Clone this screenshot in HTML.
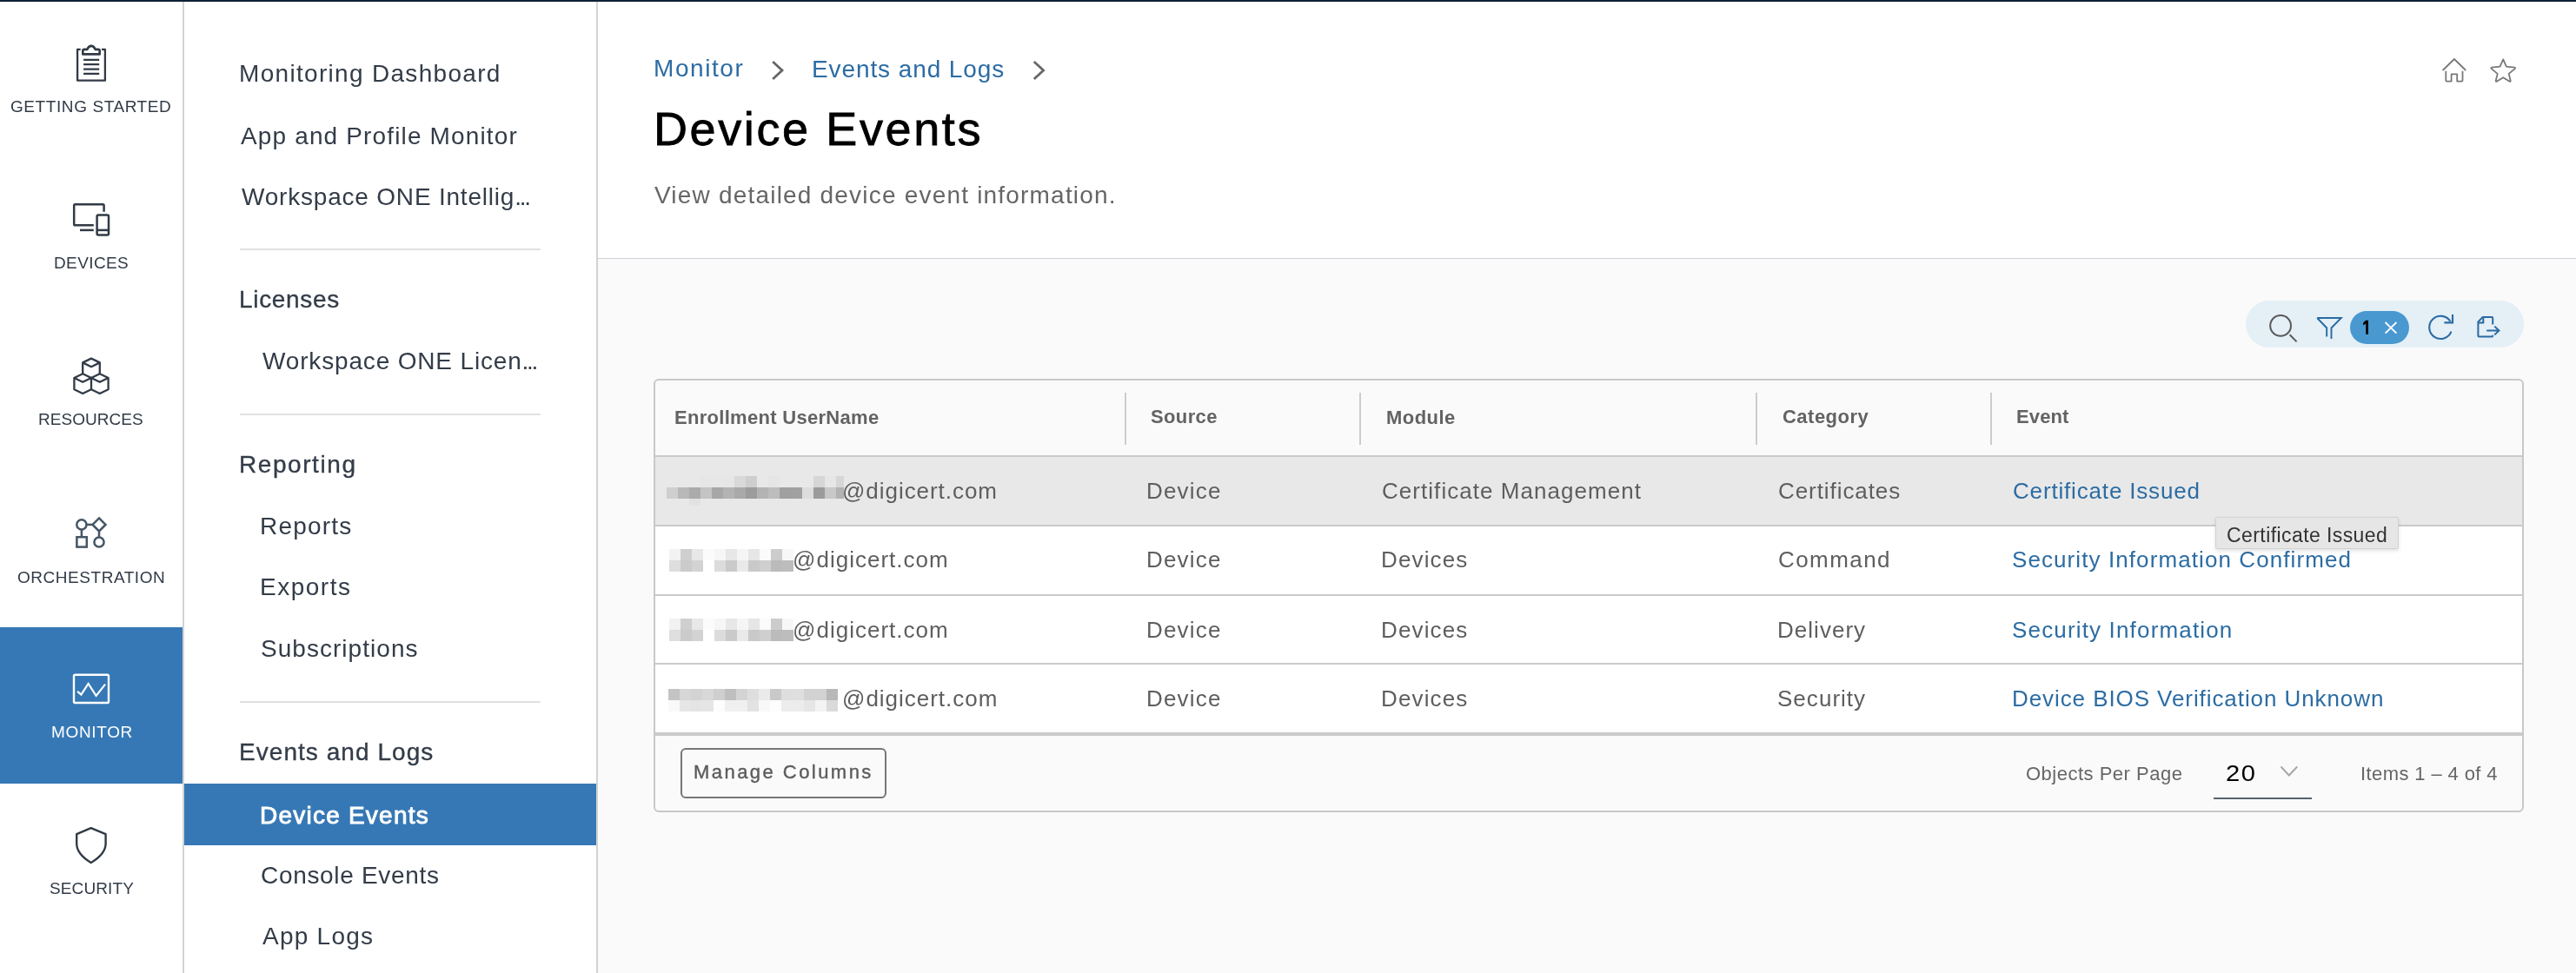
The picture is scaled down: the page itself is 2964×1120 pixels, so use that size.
<!DOCTYPE html>
<html><head><meta charset="utf-8"><style>
html,body{margin:0;padding:0;width:2964px;height:1120px;overflow:hidden;background:#fff}
body{position:relative;font-family:"Liberation Sans",sans-serif}
.t{position:absolute;white-space:nowrap;will-change:transform}
.r{position:absolute}
</style></head><body>
<div class="r" style="left:0px;top:0px;width:2964px;height:1120px;background:#ffffff;"></div>
<div class="r" style="left:688px;top:298px;width:2276px;height:822px;background:#fafafa;"></div>
<div class="r" style="left:688px;top:297px;width:2276px;height:1px;background:#c9d1d7;"></div>
<div class="r" style="left:0px;top:0px;width:2964px;height:2px;background:#0e2135;"></div>
<div class="r" style="left:210px;top:2px;width:2px;height:1118px;background:#d3d3d3;"></div>
<div class="r" style="left:686px;top:2px;width:2px;height:1118px;background:#d3d3d3;"></div>
<div class="r" style="left:0px;top:722px;width:210px;height:180px;background:#3678b5;"></div>
<div class="t" style="left:12.15px;top:112.62px;font-size:19px;line-height:19px;color:#313a46;font-weight:400;letter-spacing:0.582px;">GETTING STARTED</div>
<div class="t" style="left:62.20px;top:292.62px;font-size:19px;line-height:19px;color:#313a46;font-weight:400;letter-spacing:0.385px;">DEVICES</div>
<div class="t" style="left:44.23px;top:472.62px;font-size:19px;line-height:19px;color:#313a46;font-weight:400;letter-spacing:0.036px;">RESOURCES</div>
<div class="t" style="left:20.10px;top:654.62px;font-size:19px;line-height:19px;color:#313a46;font-weight:400;letter-spacing:0.537px;">ORCHESTRATION</div>
<div class="t" style="left:59.09px;top:832.62px;font-size:19px;line-height:19px;color:#ffffff;font-weight:400;letter-spacing:0.655px;">MONITOR</div>
<div class="t" style="left:57.07px;top:1012.62px;font-size:19px;line-height:19px;color:#313a46;font-weight:400;letter-spacing:0.113px;">SECURITY</div>
<svg class="r" style="left:0;top:0" width="210" height="1120" viewBox="0 0 210 1120" fill="none" stroke-linecap="butt">
<g stroke="#313a46" stroke-width="2.3" stroke-linejoin="round"><path d="M92.7 56.9 H89.1 V92.7 H120.9 V56.9 H117"/><path d="M95.3 62.4 V58.5 Q95.3 56.9 97 56.9 H100.3 Q102 52.9 105 52.9 Q108 52.9 109.7 56.9 H113 Q114.7 56.9 114.7 58.5 V62.4 Z" stroke-width="2.6"/><path d="M96.1 68.8H114.2M96.1 74.2H114.2M96.1 79.6H114.2M96.1 84.9H114.2"/></g>
<g stroke="#313a46" stroke-width="2.5"><path d="M119.6 243.7 V236.5 Q119.6 235.2 118.3 235.2 H86.5 Q85.2 235.2 85.2 236.5 V258 Q85.2 259.3 86.5 259.3 H107.8"/><path d="M92 264.9 H107.8"/><rect x="111.6" y="247.4" width="13.4" height="23.1" rx="1.5"/><path d="M111.6 264.9 H125"/></g>
<g stroke="#313a46" stroke-width="2.3" stroke-linejoin="round"><path d="M105 412.6 L95.2 417.4 L105 422.2 L114.8 417.4 Z"/><path d="M95.2 417.4 V430.2 M114.8 417.4 V430.2"/><path d="M85.4 435 L95.2 430.2 L105 435 L114.8 430.2 L124.6 435 V448.3 L114.8 453 L105 448.3 L95.2 453 L85.4 448.3 Z"/><path d="M85.4 435 L95.2 439.8 L105 435 L114.8 439.8 L124.6 435 M105 435 V448.3"/></g>
<g stroke="#445565" stroke-width="2.5"><circle cx="93.9" cy="603.9" r="5.6"/><path d="M99.5 603.9 H107.5"/><path d="M114 596.4 L121.5 603.9 L114 611.4 L106.5 603.9 Z"/><path d="M114 611.4 V618.2 M93.9 609.5 V618.2"/><circle cx="114" cy="624" r="5.6"/><rect x="88.4" y="618.2" width="11.4" height="11.4"/></g>
<g stroke="#ffffff" stroke-width="2.4" stroke-linejoin="miter"><rect x="85" y="776.7" width="40" height="32.3" rx="1.6"/><path d="M89.1 795.8 L93.4 799.5 L101.6 787 L110.6 800.9 L121.1 787.6" stroke-width="2.2"/></g>
<g stroke="#313a46" stroke-width="2.4" stroke-linejoin="round"><path d="M104.7 953.2 L88.2 960.2 V971 Q88.2 983 104.7 993 Q121.6 983 121.6 971 V960.2 Z"/></g>
</svg>
<div class="t" style="left:275.24px;top:71.31px;font-size:28px;line-height:28px;color:#333c48;font-weight:400;letter-spacing:1.311px;">Monitoring Dashboard</div>
<div class="t" style="left:277.04px;top:143.24px;font-size:28px;line-height:28px;color:#333c48;font-weight:400;letter-spacing:1.142px;">App and Profile Monitor</div>
<div class="t" style="left:277.98px;top:213.27px;font-size:28px;line-height:28px;color:#333c48;font-weight:400;letter-spacing:0.797px;">Workspace ONE Intellig<span style="letter-spacing:-2.3px">...</span></div>
<div class="t" style="left:275.24px;top:331.33px;font-size:28px;line-height:28px;color:#333c48;font-weight:400;letter-spacing:0.685px;-webkit-text-stroke:0.35px #333c48">Licenses</div>
<div class="t" style="left:302.00px;top:402.26px;font-size:28px;line-height:28px;color:#333c48;font-weight:400;letter-spacing:0.836px;">Workspace ONE Licen<span style="letter-spacing:-2.3px">...</span></div>
<div class="t" style="left:275.24px;top:521.33px;font-size:28px;line-height:28px;color:#333c48;font-weight:400;letter-spacing:1.568px;-webkit-text-stroke:0.35px #333c48">Reporting</div>
<div class="t" style="left:299.22px;top:592.39px;font-size:28px;line-height:28px;color:#333c48;font-weight:400;letter-spacing:1.215px;">Reports</div>
<div class="t" style="left:299.22px;top:662.36px;font-size:28px;line-height:28px;color:#333c48;font-weight:400;letter-spacing:1.500px;">Exports</div>
<div class="t" style="left:300.12px;top:733.26px;font-size:28px;line-height:28px;color:#333c48;font-weight:400;letter-spacing:1.035px;">Subscriptions</div>
<div class="t" style="left:275.22px;top:852.30px;font-size:28px;line-height:28px;color:#333c48;font-weight:400;letter-spacing:1.048px;-webkit-text-stroke:0.35px #333c48">Events and Logs</div>
<div class="t" style="left:300.12px;top:994.32px;font-size:28px;line-height:28px;color:#333c48;font-weight:400;letter-spacing:0.678px;">Console Events</div>
<div class="t" style="left:301.97px;top:1064.40px;font-size:28px;line-height:28px;color:#333c48;font-weight:400;letter-spacing:1.255px;">App Logs</div>
<div class="r" style="left:276px;top:286px;width:346px;height:2px;background:#e1e1e1;"></div>
<div class="r" style="left:276px;top:476px;width:346px;height:2px;background:#e1e1e1;"></div>
<div class="r" style="left:276px;top:807px;width:346px;height:2px;background:#e1e1e1;"></div>
<div class="r" style="left:212px;top:902px;width:474px;height:71px;background:#3678b5;"></div>
<div class="t" style="left:299.27px;top:925.12px;font-size:28px;line-height:28px;color:#ffffff;font-weight:400;letter-spacing:1.227px;-webkit-text-stroke:0.9px #fff">Device Events</div>
<div class="t" style="left:752.19px;top:65.02px;font-size:28px;line-height:28px;color:#2c6ca3;font-weight:400;letter-spacing:1.560px;">Monitor</div>
<div class="t" style="left:934.26px;top:65.74px;font-size:28px;line-height:28px;color:#2c6ca3;font-weight:400;letter-spacing:0.903px;">Events and Logs</div>
<svg class="r" style="left:0;top:0" width="1300" height="120" viewBox="0 0 1300 120" fill="none"><path d="M889.2 71 L900 81 L889.2 91" stroke="#666" stroke-width="2.8"/><path d="M1189.8 71 L1200.6 81 L1189.8 91" stroke="#666" stroke-width="2.8"/></svg>
<div class="t" style="left:752.42px;top:121.10px;font-size:54px;line-height:54px;color:#000000;font-weight:400;letter-spacing:2.608px;-webkit-text-stroke:0.8px #000">Device Events</div>
<div class="t" style="left:753.01px;top:211.32px;font-size:28px;line-height:28px;color:#666666;font-weight:400;letter-spacing:1.197px;">View detailed device event information.</div>
<svg class="r" style="left:2780px;top:40px" width="150" height="80" viewBox="2780 40 150 80" fill="none" stroke="#787878" stroke-width="1.8" stroke-linejoin="round"><path d="M2810.6 81 L2823.9 68 L2837.2 81"/><path d="M2814.3 81.8 V92.6 Q2814.3 93.6 2815.3 93.6 H2820.6 V85.3 H2827.2 V93.6 H2832.5 Q2833.5 93.6 2833.5 92.6 V81.8"/><path d="M2880.2 68.4 L2883.9 76.6 L2893.3 77.7 Q2894.6 78.2 2893.7 79.1 L2886.7 84.9 L2888.7 93 Q2888.7 94.3 2887.6 93.8 L2880.2 89.2 L2872.8 93.8 Q2871.7 94.3 2871.7 93 L2873.7 84.9 L2866.7 79.1 Q2865.8 78.2 2867.1 77.7 L2876.5 76.6 Z"/></svg>
<div class="r" style="left:2584px;top:346px;width:320px;height:54px;background:#e4eff6;border-radius:27px"></div>
<svg class="r" style="left:2584px;top:346px" width="320" height="54" viewBox="2584 346 320 54" fill="none"><circle cx="2624.1" cy="374.9" r="11.9" stroke="#595959" stroke-width="2"/><path d="M2634.6 385.2 L2642.6 393.4" stroke="#595959" stroke-width="2"/><path d="M2666.2 366 H2693.8 L2682.5 377.5 V390.1 M2677.2 387.6 V377.5 L2666.2 366" stroke="#2a6aa3" stroke-width="1.9" stroke-linejoin="miter"/><rect x="2704" y="358" width="68" height="38" rx="19" fill="#4a98d0"/><path d="M2744.6 371 L2757.4 383.6 M2757.4 371 L2744.6 383.6" stroke="#ffffff" stroke-width="1.8"/><path d="M2819.4 369.9 A13.1 13.1 0 1 0 2820.5 381.7" stroke="#2a6aa3" stroke-width="2.1"/><path d="M2812.4 371.4 H2822 V361.9" stroke="#2a6aa3" stroke-width="2.1"/><path d="M2868.2 373.5 V366.2 Q2868.2 365.1 2867.1 365.1 H2856.5 L2851.4 370.5 V386.5 Q2851.4 387.6 2852.5 387.6 H2867.1 Q2868.2 387.6 2868.2 386.5 V385.8" stroke="#2a6aa3" stroke-width="2" stroke-linejoin="round"/><path d="M2851.4 371.6 H2857.3 V365.1" stroke="#2a6aa3" stroke-width="2"/><path d="M2861.2 380.5 H2875.4 M2870.3 375.6 L2875.4 380.5 L2870.3 385.4" stroke="#2a6aa3" stroke-width="2"/></svg>
<svg class="r" style="left:2710px;top:362px" width="24" height="28" viewBox="2710 362 24 28"><path d="M2722.2 368.8 H2725 V384.8 H2722.2 V372.4 L2719.2 374.4 V371.4 Z" fill="#000"/></svg>
<div class="r" style="left:752px;top:436px;width:2152px;height:499px;background:#fafafa;box-sizing:border-box;border:2px solid #c8c8c8;border-radius:6px"></div>
<div class="r" style="left:754px;top:526px;width:2148px;height:78px;background:#e8e8e8;"></div>
<div class="r" style="left:754px;top:606px;width:2148px;height:78px;background:#ffffff;"></div>
<div class="r" style="left:754px;top:686px;width:2148px;height:77px;background:#ffffff;"></div>
<div class="r" style="left:754px;top:765px;width:2148px;height:78px;background:#ffffff;"></div>
<div class="r" style="left:754px;top:524px;width:2148px;height:2px;background:#cacaca;"></div>
<div class="r" style="left:754px;top:604px;width:2148px;height:2px;background:#cacaca;"></div>
<div class="r" style="left:754px;top:684px;width:2148px;height:2px;background:#cacaca;"></div>
<div class="r" style="left:754px;top:763px;width:2148px;height:2px;background:#cacaca;"></div>
<div class="r" style="left:754px;top:843px;width:2148px;height:4px;background:#cbcbcb;"></div>
<div class="r" style="left:1294px;top:452px;width:2px;height:60px;background:#cccccc;"></div>
<div class="r" style="left:1564px;top:452px;width:2px;height:60px;background:#cccccc;"></div>
<div class="r" style="left:2020px;top:452px;width:2px;height:60px;background:#cccccc;"></div>
<div class="r" style="left:2290px;top:452px;width:2px;height:60px;background:#cccccc;"></div>
<div class="t" style="left:776.16px;top:469.51px;font-size:22px;line-height:22px;color:#636363;font-weight:700;letter-spacing:0.295px;">Enrollment UserName</div>
<div class="t" style="left:1324.11px;top:468.61px;font-size:22px;line-height:22px;color:#636363;font-weight:700;letter-spacing:0.362px;">Source</div>
<div class="t" style="left:1595.07px;top:469.51px;font-size:22px;line-height:22px;color:#636363;font-weight:700;letter-spacing:0.452px;">Module</div>
<div class="t" style="left:2051.09px;top:468.61px;font-size:22px;line-height:22px;color:#636363;font-weight:700;letter-spacing:0.480px;">Category</div>
<div class="t" style="left:2320.16px;top:468.61px;font-size:22px;line-height:22px;color:#636363;font-weight:700;letter-spacing:0.110px;">Event</div>
<div class="t" style="left:969.44px;top:551.52px;font-size:26px;line-height:26px;color:#5e5e5e;font-weight:400;letter-spacing:0.955px;">@digicert.com</div>
<div class="t" style="left:1319.25px;top:551.52px;font-size:26px;line-height:26px;color:#5e5e5e;font-weight:400;letter-spacing:1.194px;">Device</div>
<div class="t" style="left:1590.09px;top:551.52px;font-size:26px;line-height:26px;color:#5e5e5e;font-weight:400;letter-spacing:1.045px;">Certificate Management</div>
<div class="t" style="left:2046.10px;top:551.52px;font-size:26px;line-height:26px;color:#5e5e5e;font-weight:400;letter-spacing:0.929px;">Certificates</div>
<div class="t" style="left:2316.13px;top:551.52px;font-size:26px;line-height:26px;color:#2c6ca3;font-weight:400;letter-spacing:0.830px;">Certificate Issued</div>
<div class="t" style="left:912.20px;top:630.59px;font-size:26px;line-height:26px;color:#5e5e5e;font-weight:400;letter-spacing:1.015px;">@digicert.com</div>
<div class="t" style="left:1319.25px;top:630.59px;font-size:26px;line-height:26px;color:#5e5e5e;font-weight:400;letter-spacing:1.194px;">Device</div>
<div class="t" style="left:1589.19px;top:630.59px;font-size:26px;line-height:26px;color:#5e5e5e;font-weight:400;letter-spacing:1.145px;">Devices</div>
<div class="t" style="left:2046.10px;top:630.59px;font-size:26px;line-height:26px;color:#5e5e5e;font-weight:400;letter-spacing:1.425px;">Command</div>
<div class="t" style="left:2315.23px;top:630.59px;font-size:26px;line-height:26px;color:#2c6ca3;font-weight:400;letter-spacing:1.089px;">Security Information Confirmed</div>
<div class="t" style="left:912.20px;top:711.54px;font-size:26px;line-height:26px;color:#5e5e5e;font-weight:400;letter-spacing:1.015px;">@digicert.com</div>
<div class="t" style="left:1319.25px;top:711.54px;font-size:26px;line-height:26px;color:#5e5e5e;font-weight:400;letter-spacing:1.194px;">Device</div>
<div class="t" style="left:1589.19px;top:711.54px;font-size:26px;line-height:26px;color:#5e5e5e;font-weight:400;letter-spacing:1.145px;">Devices</div>
<div class="t" style="left:2045.20px;top:711.54px;font-size:26px;line-height:26px;color:#5e5e5e;font-weight:400;letter-spacing:1.029px;">Delivery</div>
<div class="t" style="left:2315.23px;top:711.54px;font-size:26px;line-height:26px;color:#2c6ca3;font-weight:400;letter-spacing:1.163px;">Security Information</div>
<div class="t" style="left:969.22px;top:790.55px;font-size:26px;line-height:26px;color:#5e5e5e;font-weight:400;letter-spacing:0.985px;">@digicert.com</div>
<div class="t" style="left:1319.25px;top:790.55px;font-size:26px;line-height:26px;color:#5e5e5e;font-weight:400;letter-spacing:1.194px;">Device</div>
<div class="t" style="left:1589.19px;top:790.55px;font-size:26px;line-height:26px;color:#5e5e5e;font-weight:400;letter-spacing:1.145px;">Devices</div>
<div class="t" style="left:2045.20px;top:790.55px;font-size:26px;line-height:26px;color:#5e5e5e;font-weight:400;letter-spacing:1.029px;">Security</div>
<div class="t" style="left:2315.23px;top:790.55px;font-size:26px;line-height:26px;color:#2c6ca3;font-weight:400;letter-spacing:0.921px;">Device BIOS Verification Unknown</div>
<div class="r" style="left:767px;top:548px;width:13px;height:13px;background:#e8e8e8"></div>
<div class="r" style="left:780px;top:548px;width:13px;height:13px;background:#e8e8e8"></div>
<div class="r" style="left:793px;top:548px;width:13px;height:13px;background:#e8e8e8"></div>
<div class="r" style="left:806px;top:548px;width:13px;height:13px;background:#e6e6e6"></div>
<div class="r" style="left:819px;top:548px;width:13px;height:13px;background:#e7e7e7"></div>
<div class="r" style="left:832px;top:548px;width:13px;height:13px;background:#e6e6e6"></div>
<div class="r" style="left:845px;top:548px;width:13px;height:13px;background:#d9d9d9"></div>
<div class="r" style="left:858px;top:548px;width:13px;height:13px;background:#cecece"></div>
<div class="r" style="left:884px;top:548px;width:13px;height:13px;background:#e5e5e5"></div>
<div class="r" style="left:897px;top:548px;width:13px;height:13px;background:#e8e8e8"></div>
<div class="r" style="left:910px;top:548px;width:13px;height:13px;background:#e8e8e8"></div>
<div class="r" style="left:923px;top:548px;width:13px;height:13px;background:#e8e8e8"></div>
<div class="r" style="left:936px;top:548px;width:13px;height:13px;background:#d6d6d6"></div>
<div class="r" style="left:949px;top:548px;width:13px;height:13px;background:#e6e6e6"></div>
<div class="r" style="left:962px;top:548px;width:9px;height:13px;background:#d6d6d6"></div>
<div class="r" style="left:767px;top:561px;width:13px;height:13px;background:#cfcfcf"></div>
<div class="r" style="left:780px;top:561px;width:13px;height:13px;background:#b8b8b8"></div>
<div class="r" style="left:793px;top:561px;width:13px;height:13px;background:#ababab"></div>
<div class="r" style="left:806px;top:561px;width:13px;height:13px;background:#c4c4c4"></div>
<div class="r" style="left:819px;top:561px;width:13px;height:13px;background:#a7a7a7"></div>
<div class="r" style="left:832px;top:561px;width:13px;height:13px;background:#b3b3b3"></div>
<div class="r" style="left:845px;top:561px;width:13px;height:13px;background:#a9a9a9"></div>
<div class="r" style="left:858px;top:561px;width:13px;height:13px;background:#9c9c9c"></div>
<div class="r" style="left:871px;top:561px;width:13px;height:13px;background:#b3b3b3"></div>
<div class="r" style="left:884px;top:561px;width:13px;height:13px;background:#bdbdbd"></div>
<div class="r" style="left:897px;top:561px;width:13px;height:13px;background:#a0a0a0"></div>
<div class="r" style="left:910px;top:561px;width:13px;height:13px;background:#a1a1a1"></div>
<div class="r" style="left:923px;top:561px;width:13px;height:13px;background:#dddddd"></div>
<div class="r" style="left:936px;top:561px;width:13px;height:13px;background:#9b9b9b"></div>
<div class="r" style="left:949px;top:561px;width:13px;height:13px;background:#c8c8c8"></div>
<div class="r" style="left:962px;top:561px;width:9px;height:13px;background:#b2b2b2"></div>
<div class="r" style="left:793px;top:574px;width:13px;height:8px;background:#e2e2e2"></div>
<div class="r" style="left:770px;top:632px;width:13px;height:13px;background:#f2f2f2"></div>
<div class="r" style="left:783px;top:632px;width:13px;height:13px;background:#cfcfcf"></div>
<div class="r" style="left:796px;top:632px;width:13px;height:13px;background:#e8e8e8"></div>
<div class="r" style="left:809px;top:632px;width:13px;height:13px;background:#fbfbfb"></div>
<div class="r" style="left:822px;top:632px;width:13px;height:13px;background:#f6f6f6"></div>
<div class="r" style="left:835px;top:632px;width:13px;height:13px;background:#e7e7e7"></div>
<div class="r" style="left:848px;top:632px;width:13px;height:13px;background:#f5f5f5"></div>
<div class="r" style="left:861px;top:632px;width:13px;height:13px;background:#e6e6e6"></div>
<div class="r" style="left:874px;top:632px;width:13px;height:13px;background:#fbfbfb"></div>
<div class="r" style="left:887px;top:632px;width:13px;height:13px;background:#cccccc"></div>
<div class="r" style="left:900px;top:632px;width:13px;height:13px;background:#f7f7f7"></div>
<div class="r" style="left:770px;top:645px;width:13px;height:13px;background:#dedede"></div>
<div class="r" style="left:783px;top:645px;width:13px;height:13px;background:#cbcbcb"></div>
<div class="r" style="left:796px;top:645px;width:13px;height:13px;background:#d3d3d3"></div>
<div class="r" style="left:822px;top:645px;width:13px;height:13px;background:#dcdcdc"></div>
<div class="r" style="left:835px;top:645px;width:13px;height:13px;background:#cacaca"></div>
<div class="r" style="left:848px;top:645px;width:13px;height:13px;background:#e9e9e9"></div>
<div class="r" style="left:861px;top:645px;width:13px;height:13px;background:#c9c9c9"></div>
<div class="r" style="left:874px;top:645px;width:13px;height:13px;background:#cfcfcf"></div>
<div class="r" style="left:887px;top:645px;width:13px;height:13px;background:#bbbbbb"></div>
<div class="r" style="left:900px;top:645px;width:13px;height:13px;background:#bdbdbd"></div>
<div class="r" style="left:770px;top:712px;width:13px;height:13px;background:#f2f2f2"></div>
<div class="r" style="left:783px;top:712px;width:13px;height:13px;background:#cfcfcf"></div>
<div class="r" style="left:796px;top:712px;width:13px;height:13px;background:#e8e8e8"></div>
<div class="r" style="left:809px;top:712px;width:13px;height:13px;background:#fbfbfb"></div>
<div class="r" style="left:822px;top:712px;width:13px;height:13px;background:#f6f6f6"></div>
<div class="r" style="left:835px;top:712px;width:13px;height:13px;background:#e7e7e7"></div>
<div class="r" style="left:848px;top:712px;width:13px;height:13px;background:#f5f5f5"></div>
<div class="r" style="left:861px;top:712px;width:13px;height:13px;background:#e6e6e6"></div>
<div class="r" style="left:874px;top:712px;width:13px;height:13px;background:#fbfbfb"></div>
<div class="r" style="left:887px;top:712px;width:13px;height:13px;background:#cccccc"></div>
<div class="r" style="left:900px;top:712px;width:13px;height:13px;background:#f7f7f7"></div>
<div class="r" style="left:770px;top:725px;width:13px;height:13px;background:#dedede"></div>
<div class="r" style="left:783px;top:725px;width:13px;height:13px;background:#cbcbcb"></div>
<div class="r" style="left:796px;top:725px;width:13px;height:13px;background:#d3d3d3"></div>
<div class="r" style="left:822px;top:725px;width:13px;height:13px;background:#dcdcdc"></div>
<div class="r" style="left:835px;top:725px;width:13px;height:13px;background:#cacaca"></div>
<div class="r" style="left:848px;top:725px;width:13px;height:13px;background:#e9e9e9"></div>
<div class="r" style="left:861px;top:725px;width:13px;height:13px;background:#c9c9c9"></div>
<div class="r" style="left:874px;top:725px;width:13px;height:13px;background:#cfcfcf"></div>
<div class="r" style="left:887px;top:725px;width:13px;height:13px;background:#bbbbbb"></div>
<div class="r" style="left:900px;top:725px;width:13px;height:13px;background:#bdbdbd"></div>
<div class="r" style="left:769px;top:793px;width:13px;height:13px;background:#c4c4c4"></div>
<div class="r" style="left:782px;top:793px;width:13px;height:13px;background:#d7d7d7"></div>
<div class="r" style="left:795px;top:793px;width:13px;height:13px;background:#d3d3d3"></div>
<div class="r" style="left:808px;top:793px;width:13px;height:13px;background:#d8d8d8"></div>
<div class="r" style="left:821px;top:793px;width:13px;height:13px;background:#cfcfcf"></div>
<div class="r" style="left:834px;top:793px;width:13px;height:13px;background:#bfbfbf"></div>
<div class="r" style="left:847px;top:793px;width:13px;height:13px;background:#d4d4d4"></div>
<div class="r" style="left:860px;top:793px;width:13px;height:13px;background:#dedede"></div>
<div class="r" style="left:873px;top:793px;width:13px;height:13px;background:#eaeaea"></div>
<div class="r" style="left:886px;top:793px;width:13px;height:13px;background:#c9c9c9"></div>
<div class="r" style="left:899px;top:793px;width:13px;height:13px;background:#dedede"></div>
<div class="r" style="left:912px;top:793px;width:13px;height:13px;background:#dfdfdf"></div>
<div class="r" style="left:925px;top:793px;width:13px;height:13px;background:#d2d2d2"></div>
<div class="r" style="left:938px;top:793px;width:13px;height:13px;background:#d2d2d2"></div>
<div class="r" style="left:951px;top:793px;width:13px;height:13px;background:#b8b8b8"></div>
<div class="r" style="left:769px;top:806px;width:13px;height:13px;background:#f9f9f9"></div>
<div class="r" style="left:782px;top:806px;width:13px;height:13px;background:#e6e6e6"></div>
<div class="r" style="left:795px;top:806px;width:13px;height:13px;background:#e4e4e4"></div>
<div class="r" style="left:808px;top:806px;width:13px;height:13px;background:#e5e5e5"></div>
<div class="r" style="left:821px;top:806px;width:13px;height:13px;background:#fdfdfd"></div>
<div class="r" style="left:834px;top:806px;width:13px;height:13px;background:#f0f0f0"></div>
<div class="r" style="left:847px;top:806px;width:13px;height:13px;background:#f0f0f0"></div>
<div class="r" style="left:860px;top:806px;width:13px;height:13px;background:#e2e2e2"></div>
<div class="r" style="left:873px;top:806px;width:13px;height:13px;background:#f8f8f8"></div>
<div class="r" style="left:886px;top:806px;width:13px;height:13px;background:#fdfdfd"></div>
<div class="r" style="left:899px;top:806px;width:13px;height:13px;background:#ececec"></div>
<div class="r" style="left:912px;top:806px;width:13px;height:13px;background:#ececec"></div>
<div class="r" style="left:925px;top:806px;width:13px;height:13px;background:#e6e6e6"></div>
<div class="r" style="left:938px;top:806px;width:13px;height:13px;background:#f3f3f3"></div>
<div class="r" style="left:951px;top:806px;width:13px;height:13px;background:#dadada"></div>
<div class="r" style="left:2549px;top:595px;width:211px;height:37px;background:#e6e6e6;box-sizing:border-box;border:1px solid #d2d2d2;border-radius:2px;box-shadow:0 2px 4px rgba(0,0,0,0.12)"></div>
<div class="t" style="left:2562.08px;top:604.63px;font-size:23px;line-height:23px;color:#333333;font-weight:400;letter-spacing:0.420px;">Certificate Issued</div>
<div class="r" style="left:783px;top:861px;width:237px;height:58px;background:transparent;box-sizing:border-box;border:2px solid #777777;border-radius:6px"></div>
<div class="t" style="left:798.16px;top:878.38px;font-size:22px;line-height:22px;color:#5c5c5c;font-weight:400;letter-spacing:2.454px;-webkit-text-stroke:0.4px #5c5c5c">Manage Columns</div>
<div class="t" style="left:2331.16px;top:880.16px;font-size:22px;line-height:22px;color:#666666;font-weight:400;letter-spacing:0.496px;">Objects Per Page</div>
<div class="t" style="left:2561.10px;top:876.54px;font-size:26px;line-height:26px;color:#000000;font-weight:400;letter-spacing:1.310px;transform:scaleX(1.12);transform-origin:0 0">20</div>
<svg class="r" style="left:2615px;top:875px" width="40" height="30" viewBox="2615 875 40 30" fill="none"><path d="M2624.5 882.5 L2633.8 892.5 L2643.2 882.5" stroke="#a8a8a8" stroke-width="2"/></svg>
<div class="r" style="left:2547px;top:918px;width:113px;height:2px;background:#56636e;"></div>
<div class="t" style="left:2716.20px;top:880.16px;font-size:22px;line-height:22px;color:#666666;font-weight:400;letter-spacing:0.398px;">Items 1 – 4 of 4</div>
</body></html>
